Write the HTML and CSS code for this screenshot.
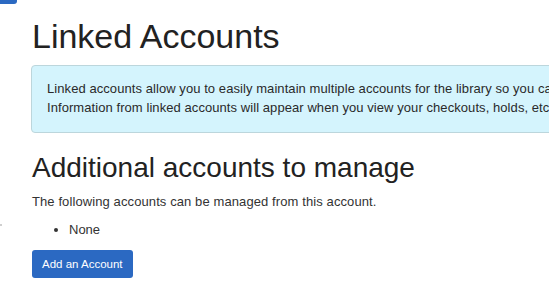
FILE: index.html
```html
<!DOCTYPE html>
<html lang="en">
<head>
<meta charset="utf-8">
<title>Linked Accounts</title>
<link rel="stylesheet" href="styles.css">
</head>
<body>
<div class="top-tab"></div>
<span class="side-dot"></span>
<main class="content">
  <h1 class="page-title">Linked Accounts</h1>
  <div class="alert-info">
    <p class="alert-line">Linked accounts allow you to easily maintain multiple accounts for the library so you can see all of your information in one place.</p>
    <p class="alert-line">Information from linked accounts will appear when you view your checkouts, holds, etc. in the main account.</p>
  </div>
  <h2 class="section-title">Additional accounts to manage</h2>
  <p class="section-text">The following accounts can be managed from this account.</p>
  <ul class="account-list">
    <li>None</li>
  </ul>
  <button class="btn-primary" type="button">Add an Account</button>
</main>
</body>
</html>
```

FILE: styles.css
```css
html, body {
  margin: 0;
  padding: 0;
  background: #ffffff;
  overflow: hidden;
}
body {
  font-family: "Liberation Sans", Arial, sans-serif;
  font-size: 13px;
  line-height: 18.57px;
  color: #333333;
  position: relative;
  width: 549px;
  height: 285px;
}
.top-tab {
  width: 17px;
  height: 4px;
  background: #2b69c2;
  border-bottom-right-radius: 3px;
}
.side-dot {
  position: absolute;
  left: 0;
  top: 224px;
  width: 2px;
  height: 2px;
  background: #cfcfcf;
}
.content {
  padding-left: 32px;
  width: 760px;
}
.page-title {
  margin: 12px 0 9px;
  font-size: 34px;
  line-height: 40px;
  font-weight: normal;
  color: #222222;
}
.alert-info {
  margin-left: -1px;
  background: #d4f4fd;
  border: 1px solid #bcd6dc;
  border-radius: 4px;
  padding: 14px 15px 15px;
  color: #2a2a2a;
  letter-spacing: 0.07px;
}
.alert-line {
  margin: 0;
  white-space: nowrap;
}
.section-title {
  margin: 20px 0 10px;
  font-size: 28px;
  line-height: 29.7px;
  font-weight: normal;
  color: #222222;
}
.section-text {
  margin: 0 0 10px;
  letter-spacing: 0.1px;
}
.account-list {
  margin: 0 0 10px;
  padding-left: 37px;
}
.btn-primary {
  display: block;
  font-family: "Liberation Sans", Arial, sans-serif;
  font-size: 11.5px;
  line-height: 18px;
  padding: 5px 10px;
  border: none;
  border-radius: 3px;
  background: #2b69c2;
  color: #ffffff;
}
```
